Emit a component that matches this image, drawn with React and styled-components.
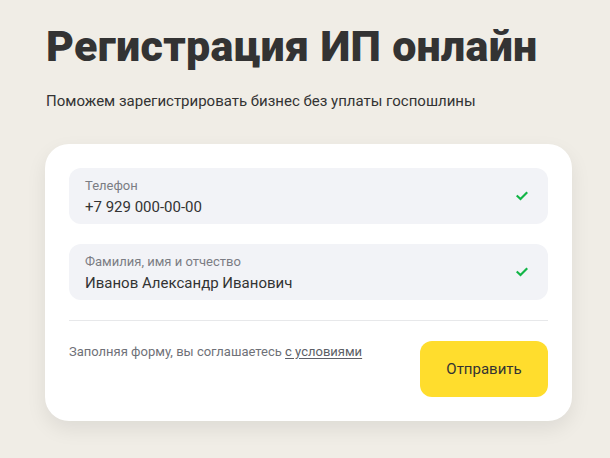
import React from "react";
import styled, { createGlobalStyle } from "styled-components";

const Global = createGlobalStyle`
  html, body { margin: 0; padding: 0; }
  body {
    background: #f0ede6;
    font-family: Roboto, "Liberation Sans", sans-serif;
    color: #333333;
    width: 610px;
    height: 458px;
    overflow: hidden;
  }
`;

const Page = styled.main`
  padding: 21px 38px 0 45px;
  display: flex;
  flex-direction: column;
`;

const Title = styled.h1`
  margin: 0 0 0 1px;
  font-family: Roboto, "Liberation Sans", sans-serif;
  font-weight: 900;
  font-size: 43px;
  line-height: 50px;
  letter-spacing: 0.3px;
  white-space: nowrap;
  color: #333333;
`;

const Subtitle = styled.p`
  margin: 20px 0 0 1px;
  font-size: 15px;
  line-height: 20px;
  color: #333333;
`;

const Card = styled.form`
  margin-top: 33px;
  background: #ffffff;
  border-radius: 24px;
  padding: 24px;
  box-shadow: 0 8px 20px rgba(0, 0, 0, 0.08);
  display: flex;
  flex-direction: column;
  gap: 20px;
`;

const Field = styled.label`
  display: flex;
  align-items: center;
  justify-content: space-between;
  height: 56px;
  box-sizing: border-box;
  padding: 0 20px 0 16px;
  background: #f2f3f7;
  border-radius: 12px;
`;

const FieldText = styled.div`
  display: flex;
  flex-direction: column;
  gap: 3px;
  padding-top: 3px;
`;

const Label = styled.span`
  font-size: 13px;
  line-height: 16px;
  color: #7b7d84;
`;

const Value = styled.span`
  font-size: 15px;
  line-height: 20px;
  color: #333333;
`;

const Divider = styled.hr`
  margin: 0;
  border: none;
  border-top: 1px solid #e7e8ea;
`;

const Footer = styled.div`
  display: flex;
  justify-content: space-between;
  align-items: flex-start;
`;

const Note = styled.p`
  margin: 0;
  padding-top: 3px;
  font-size: 13px;
  line-height: 16px;
  color: #6f7178;
`;

const Link = styled.a`
  color: #5d5f66;
  text-decoration: underline;
  text-underline-offset: 2px;
`;

const Button = styled.button`
  width: 128px;
  height: 56px;
  border: none;
  border-radius: 12px;
  background: #ffdd2d;
  font-family: Roboto, "Liberation Sans", sans-serif;
  font-size: 15px;
  color: #333333;
  cursor: pointer;
`;

const Check = () => (
  <svg width="12" height="10" viewBox="0 0 12 10" aria-hidden="true">
    <path d="M1.5 5.2 L4.5 8 L10.5 2" fill="none" stroke="#12b547" strokeWidth="2.2" strokeLinecap="square" />
  </svg>
);

export default function App() {
  return (
    <>
      <Global />
      <Page>
        <Title>Регистрация ИП онлайн</Title>
        <Subtitle>Поможем зарегистрировать бизнес без уплаты госпошлины</Subtitle>
        <Card onSubmit={(e) => e.preventDefault()}>
          <Field>
            <FieldText>
              <Label>Телефон</Label>
              <Value>+7 929 000-00-00</Value>
            </FieldText>
            <Check />
          </Field>
          <Field>
            <FieldText>
              <Label>Фамилия, имя и отчество</Label>
              <Value>Иванов Александр Иванович</Value>
            </FieldText>
            <Check />
          </Field>
          <Divider />
          <Footer>
            <Note>
              Заполняя форму, вы соглашаетесь <Link href="#">с условиями</Link>
            </Note>
            <Button type="submit">Отправить</Button>
          </Footer>
        </Card>
      </Page>
    </>
  );
}
